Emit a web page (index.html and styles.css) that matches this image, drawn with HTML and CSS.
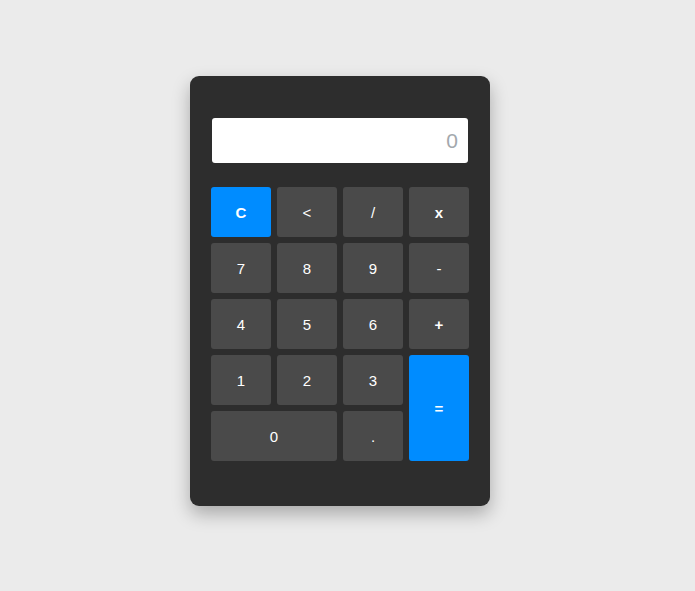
FILE: index.html
```html
<!DOCTYPE html>
<html>
<head>
<meta charset="utf-8">
<link rel="stylesheet" href="styles.css">
</head>
<body>
<div class="page">
  <div class="calc">
    <div class="display">0</div>
    <div class="keys">
      <button class="key blue bold">C</button>
      <button class="key">&lt;</button>
      <button class="key">/</button>
      <button class="key bold">x</button>
      <button class="key">7</button>
      <button class="key">8</button>
      <button class="key">9</button>
      <button class="key">-</button>
      <button class="key">4</button>
      <button class="key">5</button>
      <button class="key">6</button>
      <button class="key bold">+</button>
      <button class="key">1</button>
      <button class="key">2</button>
      <button class="key">3</button>
      <button class="key blue bold equals">=</button>
      <button class="key zero">0</button>
      <button class="key">.</button>
    </div>
  </div>
</div>
</body>
</html>
```
FILE: styles.css
```css
html, body {
  margin: 0;
  background: #ebebeb;
  font-family: "Liberation Sans", Arial, sans-serif;
}
.page {
  padding: 76px 0 0 190px;
  height: 591px;
  box-sizing: border-box;
}
.calc {
  width: 300px;
  height: 430px;
  box-sizing: border-box;
  background: #2d2d2d;
  border-radius: 9px;
  padding: 42px 21px 45px;
  box-shadow: 0 8px 18px rgba(0, 0, 0, 0.28);
}
.display {
  margin: 0 1px 24px;
  height: 45px;
  background: #fff;
  border-radius: 3px;
  color: #a3a8ad;
  font-size: 21px;
  text-align: right;
  padding-right: 10px;
  line-height: 45px;
  box-sizing: border-box;
}
.keys {
  display: grid;
  grid-template-columns: repeat(4, 60px);
  grid-auto-rows: 50px;
  gap: 6px;
}
.key {
  border: none;
  border-radius: 3px;
  background: #4a4a4a;
  color: #fff;
  font-family: "Liberation Sans", Arial, sans-serif;
  font-size: 15px;
  padding: 0;
  margin: 0;
}
.bold { font-weight: bold; }
.blue { background: #008cff; }
.equals { grid-row: span 2; }
.zero { grid-column: span 2; }
```
